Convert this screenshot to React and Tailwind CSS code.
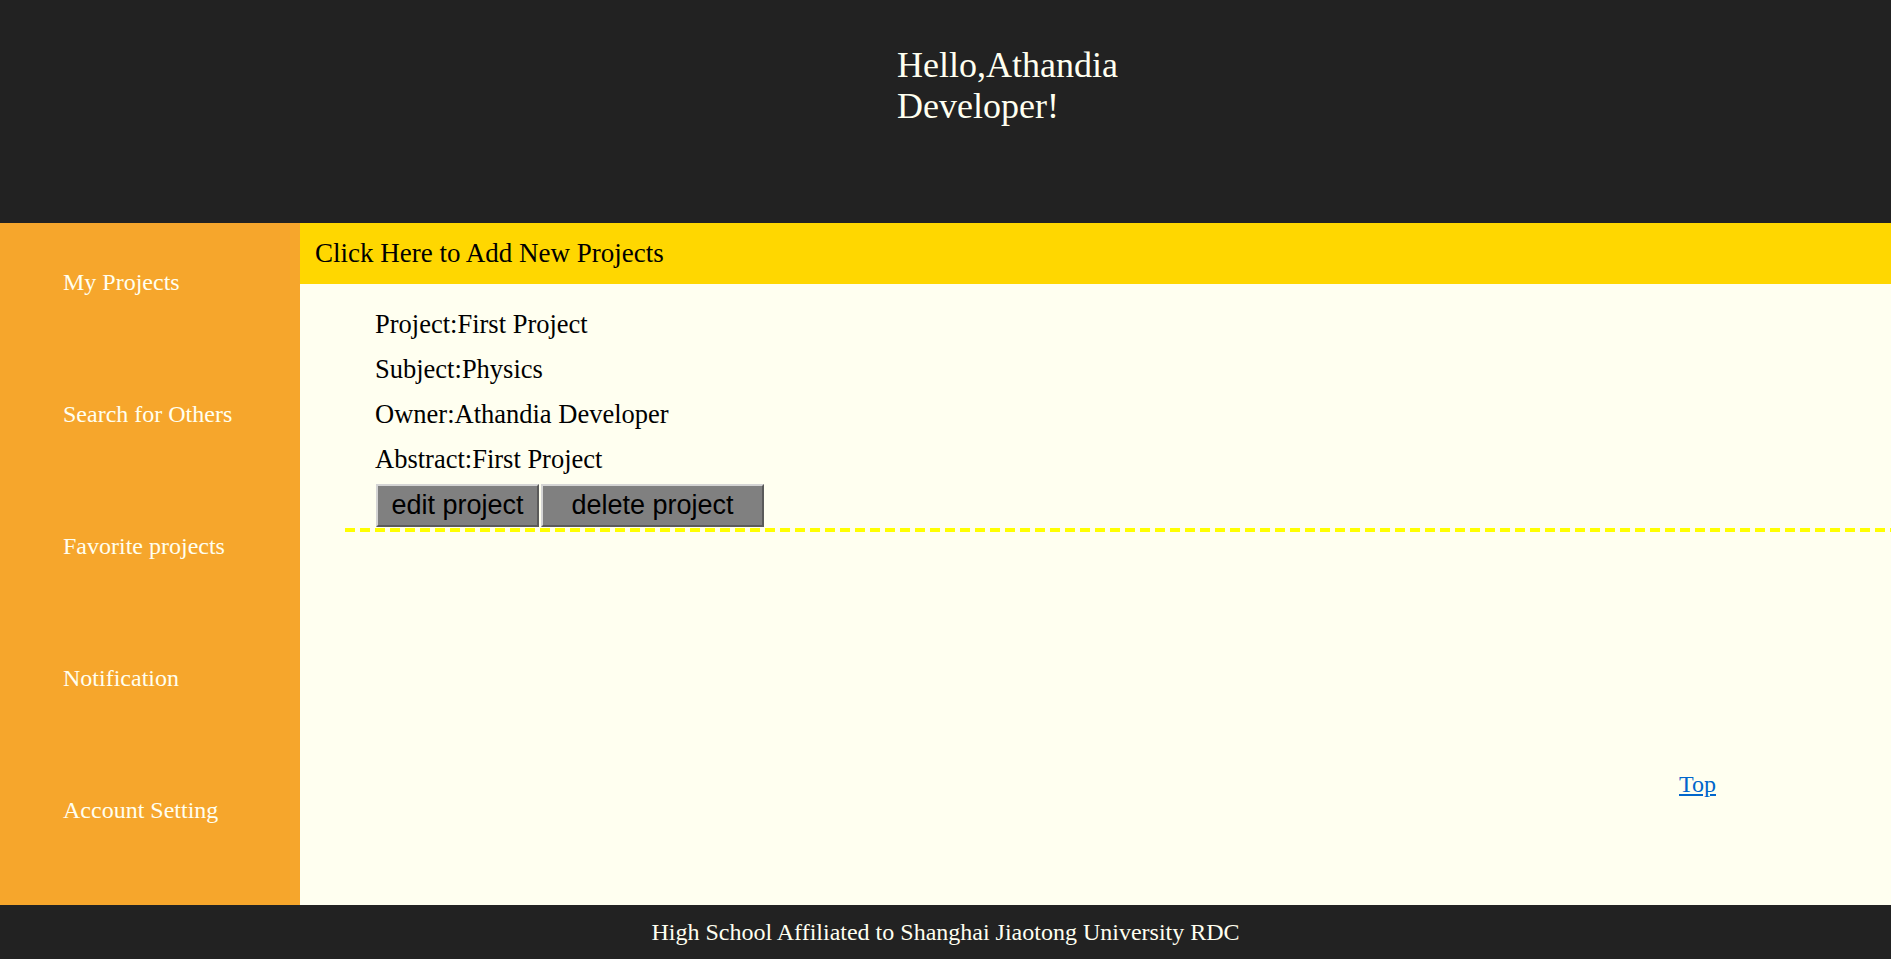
const NAV = ["My Projects", "Search for Others", "Favorite projects", "Notification", "Account Setting"];

const PROJECT = [
  ["Project", "First Project"],
  ["Subject", "Physics"],
  ["Owner", "Athandia Developer"],
  ["Abstract", "First Project"],
];

export default function App() {
  return (
    <div className="w-[1891px] h-[959px] flex flex-col font-['Liberation_Serif',serif] overflow-hidden">
      {/* Header */}
      <header className="h-[223px] shrink-0 bg-[#222222] pl-[897px] pt-[45px]">
        <h1 className="w-[260px] text-[36px] leading-[41px] text-[#fffff0] font-normal">Hello,Athandia Developer!</h1>
      </header>

      <div className="h-[682px] shrink-0 flex">
        {/* Sidebar */}
        <nav className="w-[300px] shrink-0 bg-[#f6a62c] pt-[45px]">
          {NAV.map((item) => (
            <div key={item} className="h-[132px] pl-[63px] text-[24px] leading-[28px] text-[#fffff0]">
              {item}
            </div>
          ))}
        </nav>

        {/* Content */}
        <main className="flex-1 bg-[#fffff0] flex flex-col">
          <div className="h-[61px] shrink-0 bg-[#ffd700] pl-[15px] flex items-center text-[27px] text-black">
            Click Here to Add New Projects
          </div>

          <div className="ml-[45px] mt-[25px]">
            <div className="pl-[30px] flex flex-col gap-[15px] text-[26.5px] leading-[30px] text-black">
              {PROJECT.map(([k, v]) => (
                <p key={k}>{k}:{v}</p>
              ))}
            </div>
            <div className="pl-[31px] mt-[10px] flex gap-[2px] font-['Liberation_Sans',sans-serif] text-[27px] text-black">
              <button className="w-[163px] h-[43px] flex items-center justify-center bg-[#808080] border-2 border-t-[#d4d4d4] border-l-[#d4d4d4] border-r-[#5a5a5a] border-b-[#5a5a5a]">
                edit project
              </button>
              <button className="w-[223px] h-[43px] flex items-center justify-center bg-[#808080] border-2 border-t-[#d4d4d4] border-l-[#d4d4d4] border-r-[#5a5a5a] border-b-[#5a5a5a]">
                delete project
              </button>
            </div>
            <div className="mt-[1px] h-[4px] bg-[repeating-linear-gradient(to_right,#ffff00_0_10px,transparent_10px_15px)]" />
          </div>

          <div className="mt-[238px] flex justify-end pr-[175px]">
            <a href="#" className="text-[24px] leading-[28px] text-[#0066cc] underline">Top</a>
          </div>
        </main>
      </div>

      {/* Footer */}
      <footer className="flex-1 bg-[#222222] flex items-center justify-center text-[24px] text-[#fffff0]">
        High School Affiliated to Shanghai Jiaotong University RDC
      </footer>
    </div>
  );
}
